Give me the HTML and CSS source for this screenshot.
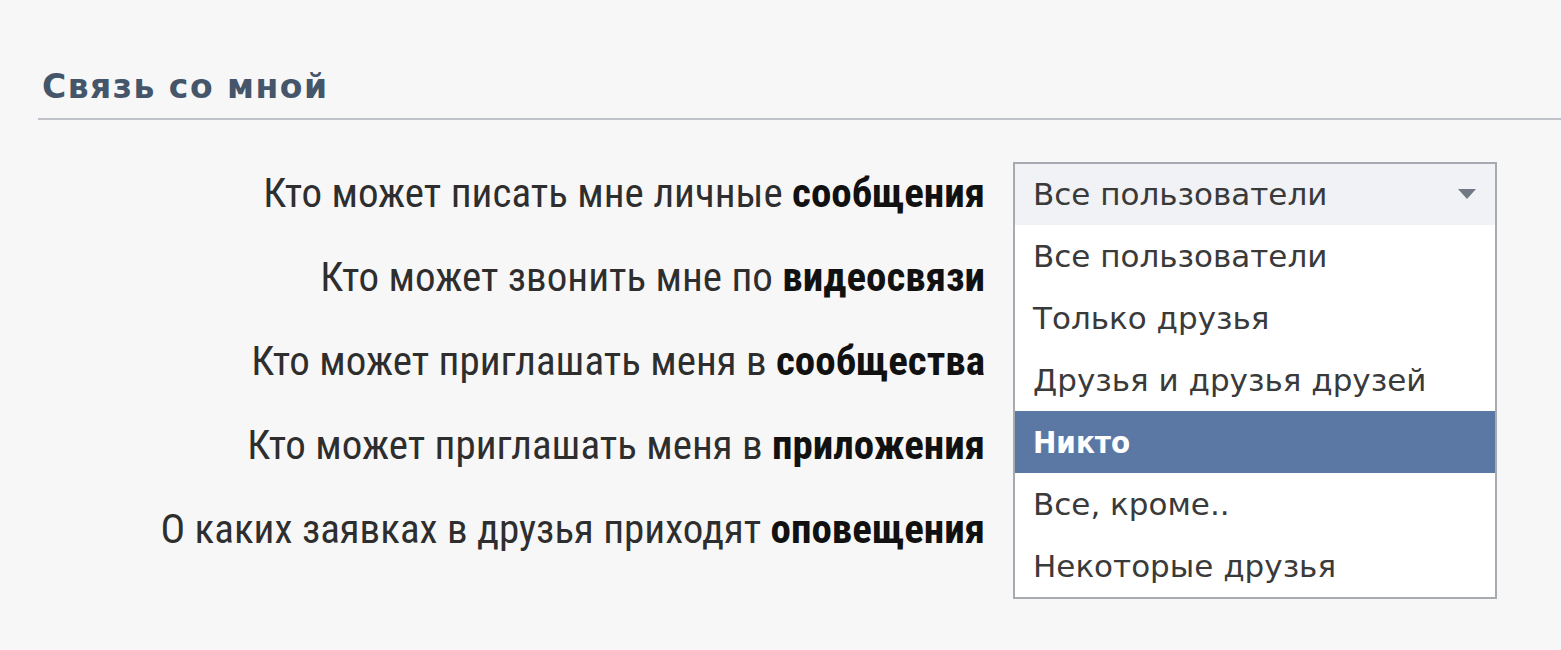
FILE: index.html
```html
<!DOCTYPE html>
<html lang="ru">
<head>
<meta charset="utf-8">
<link rel="stylesheet" href="styles.css">
</head>
<body>
<div class="page">
  <h2 class="title">Связь со мной</h2>
  <div class="rows">
    <div class="row">
      <div class="label">Кто может писать мне личные <b>сообщения</b></div>
      <div class="control">
        <div class="select">
          <div class="select-head"><span>Все пользователи</span><span class="arrow"></span></div>
          <ul class="menu">
            <li>Все пользователи</li>
            <li>Только друзья</li>
            <li>Друзья и друзья друзей</li>
            <li class="active">Никто</li>
            <li>Все, кроме..</li>
            <li>Некоторые друзья</li>
          </ul>
        </div>
      </div>
    </div>
    <div class="row">
      <div class="label">Кто может звонить мне по <b>видеосвязи</b></div>
      <div class="control"></div>
    </div>
    <div class="row">
      <div class="label">Кто может приглашать меня в <b>сообщества</b></div>
      <div class="control"></div>
    </div>
    <div class="row">
      <div class="label">Кто может приглашать меня в <b>приложения</b></div>
      <div class="control"></div>
    </div>
    <div class="row">
      <div class="label">О каких заявках в друзья приходят <b>оповещения</b></div>
      <div class="control"></div>
    </div>
  </div>
</div>
</body>
</html>
```
FILE: styles.css
```css
html, body {
  margin: 0;
  padding: 0;
  background: #f7f7f7;
}
body {
  font-family: "DejaVu Sans", sans-serif;
  color: #333;
  width: 1561px;
  height: 650px;
  overflow: hidden;
}
.page {
  padding: 67px 0 0 38px;
}
.title {
  margin: 0;
  padding: 0 0 11px 4px;
  font-family: "DejaVu Sans", sans-serif;
  font-size: 33px;
  line-height: 40px;
  letter-spacing: 1.5px;
  font-weight: bold;
  color: #45556a;
  border-bottom: 2px solid #bfc3c9;
}
.rows {
  padding-top: 31px;
  display: flex;
  flex-direction: column;
}
.row {
  display: flex;
  align-items: center;
  height: 84px;
}
.label {
  width: 947px;
  text-align: right;
  font-family: "Roboto Condensed", "Roboto", sans-serif;
  font-stretch: condensed;
  font-size: 41px;
  line-height: 48px;
  color: #2e2e2e;
  white-space: nowrap;
}
.label b {
  color: #111;
  font-weight: bold;
}
.control {
  margin-left: 28px;
  width: 484px;
  height: 63px;
  position: relative;
}
.select {
  position: absolute;
  left: 0;
  top: 0;
  width: 484px;
  border: 2px solid #a7abb1;
  box-sizing: border-box;
  background: #fff;
  z-index: 2;
}
.select-head {
  height: 61px;
  display: flex;
  align-items: center;
  justify-content: space-between;
  padding: 0 19px 0 18px;
  background: #f0f2f5;
  font-size: 31px;
  color: #3a3a3a;
}
.arrow {
  width: 0;
  height: 0;
  border-left: 9px solid transparent;
  border-right: 9px solid transparent;
  border-top: 10px solid #6f7884;
}
.menu {
  list-style: none;
  margin: 0;
  padding: 0;
}
.menu li {
  height: 62px;
  display: flex;
  align-items: center;
  padding-left: 18px;
  font-size: 31px;
  color: #3a3a3a;
}
.menu li.active {
  background: #5b78a5;
  color: #fff;
  font-family: "DejaVu Sans Condensed", "DejaVu Sans", sans-serif;
  font-weight: bold;
}
```
